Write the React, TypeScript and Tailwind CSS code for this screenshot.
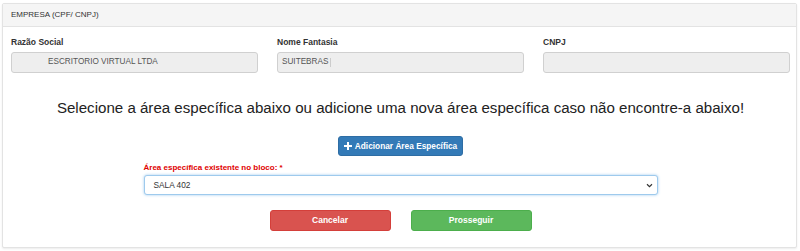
import React from "react";

const font = { fontFamily: '"Liberation Sans", Arial, sans-serif' };

function Field({ label, children }: { label: string; children?: React.ReactNode }) {
  return (
    <div className="flex flex-col">
      <label className="text-[8.5px] font-bold text-[#333] leading-[11px] mb-[4px]">{label}</label>
      <div className="h-[21px] rounded-[3px] border border-[#d0d0d0] bg-[#eeeeee] flex items-center px-[4px] text-[8.2px] text-[#555]">
        {children}
      </div>
    </div>
  );
}

export default function App() {
  return (
    <div className="w-[800px] h-[251px] bg-white pt-[3px] pl-[2px] overflow-hidden" style={font}>
      <div className="w-[795px] h-[245px] border border-[#e3e3e3] rounded-[2px] shadow-[0_1px_2px_rgba(0,0,0,0.08)] bg-white">
        <div className="h-[23px] bg-[#f5f5f5] border-b border-[#e3e3e3] flex items-center px-[8px] text-[8px] text-[#333]">
          EMPRESA (CPF/ CNPJ)
        </div>
        <div className="pl-[8px] pr-[6px] pt-[10px]">
          <div className="grid grid-cols-3 gap-x-[19px]">
            <Field label="Razão Social">
              <span className="pl-[32px]">ESCRITORIO VIRTUAL LTDA</span>
            </Field>
            <Field label="Nome Fantasia">
              SUITEBRAS
              <span className="ml-[2px] inline-block w-px h-[9px] bg-[#ccc]" />
            </Field>
            <Field label="CNPJ" />
          </div>

          <h2 className="mt-[25px] text-center text-[15.1px] text-[#222] leading-[20px]">
            Selecione a área específica abaixo ou adicione uma nova área específica caso não encontre-a abaixo!
          </h2>

          <div className="flex justify-center mt-[18px]">
            <button className="h-[20px] w-[125px] rounded-[3px] bg-[#337ab7] border border-[#2e6da4] text-white text-[8.3px] font-bold flex items-center justify-center gap-[3px]">
              <svg width="8" height="8" viewBox="0 0 8 8">
                <path d="M3 0h2v3h3v2H5v3H3V5H0V3h3z" fill="white" />
              </svg>
              Adicionar Área Específica
            </button>
          </div>

          <div className="w-[514px] mx-auto mt-[6px]">
            <label className="block text-[8px] font-bold text-[#e00000] leading-[11px] mb-[2px]">
              Área específica existente no bloco: *
            </label>
            <div className="h-[20px] rounded-[3px] border border-[#9ecaed] shadow-[0_0_3px_#9ecaed] bg-white flex items-center justify-between pl-[9px] pr-[4px] text-[8.3px] text-[#333]">
              <span>SALA 402</span>
              <svg width="7" height="5" viewBox="0 0 8 6">
                <path d="M1 1.5l3 3 3-3" stroke="#333" strokeWidth="1.4" fill="none" />
              </svg>
            </div>
          </div>

          <div className="flex justify-center gap-[20px] mt-[15px]">
            <button className="h-[21px] w-[121px] rounded-[3px] bg-[#d9534f] border border-[#d43f3a] text-white text-[8.5px] font-bold">
              Cancelar
            </button>
            <button className="h-[21px] w-[121px] rounded-[3px] bg-[#5cb85c] border border-[#4cae4c] text-white text-[8.5px] font-bold">
              Prosseguir
            </button>
          </div>
        </div>
      </div>
    </div>
  );
}
